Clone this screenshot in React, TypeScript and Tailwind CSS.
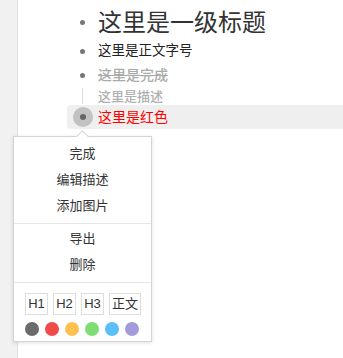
import React from 'react'

const font = "font-['Liberation_Sans','Noto_Sans_CJK_SC',sans-serif]"

const colors = ['bg-[#6b6b6b]', 'bg-[#f04b4b]', 'bg-[#ffc152]', 'bg-[#80dd74]', 'bg-[#5bbffa]', 'bg-[#a49bdd]']

function Dot() {
  return <span className="block w-[5px] h-[5px] rounded-full bg-[#777]" />
}

export default function App() {
  return (
    <div className={`relative flex w-[343px] h-[358px] overflow-hidden bg-white ${font}`}>
      <div className="w-[18px] shrink-0 bg-[#f1f1f1] border-r border-[#e2e2e2]" />
      <div className="flex-1 pl-[49px] pt-[6px]">
        <div className="flex items-center h-[33px]">
          <div className="w-[31px] flex justify-center"><Dot /></div>
          <span className="text-[24px] text-[#333] leading-none">这里是一级标题</span>
        </div>
        <div className="flex items-center h-[24px]">
          <div className="w-[31px] flex justify-center"><Dot /></div>
          <span className="text-[13.5px] text-[#222] leading-none">这里是正文字号</span>
        </div>
        <div className="flex items-center h-[24px]">
          <div className="w-[31px] flex justify-center"><Dot /></div>
          <span className="text-[14px] font-medium text-[#aaa] line-through leading-none">这里是完成</span>
        </div>
        <div className="flex items-center h-[18px]">
          <div className="w-[31px] h-full flex justify-center py-[1px]">
            <span className="block w-px h-full bg-[#ddd]" />
          </div>
          <span className="text-[13px] font-medium text-[#b0b0b0] leading-none">这里是描述</span>
        </div>
        <div className="flex items-center h-[24px] bg-[#efefef] rounded-l-[4px]">
          <div className="w-[31px] flex justify-center">
            <span className="flex items-center justify-center w-[20px] h-[20px] rounded-full bg-[#c2c2c2]">
              <span className="block w-[6px] h-[6px] rounded-full bg-[#666]" />
            </span>
          </div>
          <span className="text-[14px] text-[#f00] leading-none">这里是红色</span>
        </div>
      </div>

      <div className="absolute left-[13px] top-[136px] w-[139px] h-[206px] bg-white border border-[#d4d4d4] shadow-[0_1px_4px_rgba(0,0,0,0.12)]">
        <span className="absolute left-[64px] -top-[5px] w-[9px] h-[9px] rotate-45 bg-white border-l border-t border-[#d4d4d4]" />
        <div className="py-[4px] text-[13px] text-[#333] text-center">
          <div className="h-[26px] flex items-center justify-center">完成</div>
          <div className="h-[26px] flex items-center justify-center">编辑描述</div>
          <div className="h-[26px] flex items-center justify-center">添加图片</div>
        </div>
        <div className="border-t border-[#e6e6e6] pt-[2px] pb-[4px] text-[13px] text-[#333] text-center">
          <div className="h-[26px] flex items-center justify-center">导出</div>
          <div className="h-[26px] flex items-center justify-center">删除</div>
        </div>
        <div className="border-t border-[#e6e6e6] pt-[10px] pl-[11px]">
          <div className="flex gap-[5px]">
            {['H1', 'H2', 'H3'].map((h) => (
              <span key={h} className="w-[23px] h-[22px] flex items-center justify-center border border-[#ddd] text-[13px] text-[#333]">{h}</span>
            ))}
            <span className="w-[32px] h-[22px] flex items-center justify-center border border-[#ddd] text-[13px] text-[#333]">正文</span>
          </div>
          <div className="flex gap-[6px] mt-[7px]">
            {colors.map((c) => (
              <span key={c} className={`block w-[14px] h-[14px] rounded-full ${c}`} />
            ))}
          </div>
        </div>
      </div>
    </div>
  )
}
